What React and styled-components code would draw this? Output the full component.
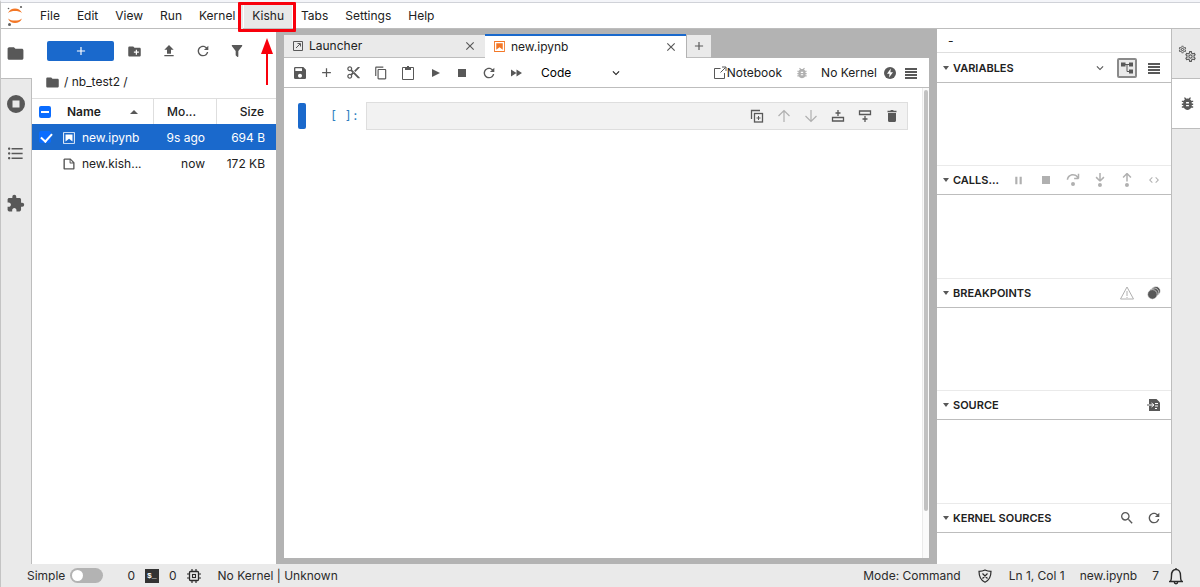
import React, { useState } from "react";
import styled, { createGlobalStyle, css } from "styled-components";
import {
  MdAdd,
  MdBugReport,
  MdClose,
  MdCode,
  MdContentCopy,
  MdContentCut,
  MdCreateNewFolder,
  MdExpandMore,
  MdExtension,
  MdFolder,
  MdFormatListBulleted,
  MdOutlineSettings,
  MdPause,
  MdSave,
  MdSearch,
  MdStop,
} from "react-icons/md";
import {
  VscDebugStepInto,
  VscDebugStepOut,
  VscDebugStepOver,
} from "react-icons/vsc";

const MENUS = [
  "File",
  "Edit",
  "View",
  "Run",
  "Kernel",
  "Kishu",
  "Tabs",
  "Settings",
  "Help",
];

const FILES = [
  { name: "new.ipynb", modified: "9s ago", size: "694 B", type: "notebook" },
  { name: "new.kish...", modified: "now", size: "172 KB", type: "file" },
];

/* ---------- icons ---------- */

const JupyterLogo = () => (
  <svg width="18" height="22" viewBox="0 0 18 22">
    <path d="M2 8C3.500 4.600 6 3.400 9 3.400s5.500 1.200 7 4.600C14 6.400 11.700 5.900 9 5.900S4 6.400 2 8z" fill="#f37726" />
    <path d="M2 13.500c1.500 3.400 4 4.600 7 4.600s5.500-1.200 7-4.600c-2 1.600-4.300 2.100-7 2.100s-5-.5-7-2.100z" fill="#f37726" />
    <circle cx="15" cy="2" r="1.100" fill="#616161" />
    <circle cx="2.500" cy="3.500" r="0.800" fill="#616161" />
    <circle cx="3.500" cy="19.500" r="1.500" fill="#616161" />
  </svg>
);

const UploadIcon = () => (
  <svg width="16" height="16" viewBox="0 0 24 24" fill="currentColor">
    <path d="M5 20h14v-2H5v2zm0-10h4v6h6v-6h4l-7-7-7 7z" />
  </svg>
);

const RefreshIcon = () => (
  <svg width="16" height="16" viewBox="0 0 18 18" fill="currentColor">
    <path d="M9 13.500c-2.490 0-4.500-2.010-4.500-4.500S6.510 4.500 9 4.500c1.240 0 2.360.52 3.170 1.330L10 8h5V3l-1.760 1.760C12.150 3.680 10.660 3 9 3 5.690 3 3.010 5.690 3.010 9S5.690 15 9 15c2.970 0 5.430-2.160 5.900-5h-1.520c-.46 2-2.240 3.500-4.380 3.500z" />
  </svg>
);

const FilterIcon = () => (
  <svg width="16" height="16" viewBox="0 0 24 24" fill="currentColor">
    <path d="M14 12v7.880c.04.3-.06.62-.29.83-.39.39-1.020.39-1.410 0l-2.010-2.010c-.23-.23-.33-.54-.29-.83V12h-.03L4.210 4.620c-.34-.43-.26-1.060.17-1.400.19-.14.4-.22.62-.22h14c.22 0 .43.08.62.22.43.34.51.97.17 1.400L14.030 12H14z" />
  </svg>
);

const NotebookIcon = ({ size = 14 }) => (
  <svg width={size} height={size} viewBox="0 0 22 22" fill="currentColor">
    <path d="M18.700 3.300v15.400H3.300V3.300h15.400m1.500-1.500H1.800v18.300h18.300l.1-18.300z" />
    <path d="M16.500 16.500l-5.400-4.300-5.600 4.300v-11h11z" />
  </svg>
);

const FileIcon = () => (
  <svg width="14" height="14" viewBox="0 0 22 22" fill="#585858">
    <path d="M19.300 8.200l-5.500-5.500c-.3-.3-.7-.5-1.200-.5H3.900c-.8.1-1.600.9-1.600 1.800v14.100c0 .9.7 1.600 1.600 1.600h14.200c.9 0 1.600-.7 1.600-1.600V9.400c.1-.5-.1-.9-.4-1.200zm-5.800-3.300l3.400 3.600h-3.400V4.900zm3.900 12.700H4.700c-.1 0-.2 0-.2-.2V4.700c0-.2.1-.3.2-.3h7.200v4.400s0 .8.3 1.100c.3.3 1.100.3 1.100.3h4.300v7.200s-.1.2-.2.2z" />
  </svg>
);

const RunningIcon = () => (
  <svg width="20" height="20" viewBox="0 0 20 20" fill="currentColor">
    <path fillRule="evenodd" d="M10 1a9 9 0 100 18 9 9 0 000-18zM6.500 6.500h7v7h-7z" />
  </svg>
);

const LauncherIcon = () => (
  <svg width="12" height="12" viewBox="0 0 12 12" fill="none" stroke="currentColor">
    <path d="M1.500 1.500h9v9h-9zM4 8l4-4M5.500 3.500h3v3" />
  </svg>
);

const PasteIcon = () => (
  <svg width="16" height="16" viewBox="0 0 16 16" fill="none" stroke="currentColor">
    <path d="M5.500 2.500h-3v12h11v-12h-3" />
    <path d="M5 2h6v3H5z" fill="currentColor" stroke="none" />
    <path d="M7 1h2v2H7z" fill="currentColor" stroke="none" />
  </svg>
);

const RunIcon = () => (
  <svg width="16" height="16" viewBox="0 0 16 16" fill="currentColor">
    <path d="M5 4l8 4-8 4z" />
  </svg>
);

const StopIcon = () => (
  <svg width="16" height="16" viewBox="0 0 16 16" fill="currentColor">
    <path d="M4 4h8v8H4z" />
  </svg>
);

const FastForwardIcon = () => (
  <svg width="16" height="16" viewBox="0 0 16 16" fill="currentColor">
    <path d="M3 4.500l5.500 3.500L3 11.500zM8.500 4.500l5.500 3.500-5.500 3.500z" />
  </svg>
);

const OpenIcon = () => (
  <svg width="14" height="14" viewBox="0 0 14 14" fill="none" stroke="#585858">
    <path d="M7.500 2.500h-6v10h10V7M7.500 6.500l5-5M9 1h4v4" />
  </svg>
);

const KernelIcon = () => (
  <svg width="14" height="14" viewBox="0 0 14 14">
    <circle cx="7" cy="7" r="6" fill="currentColor" />
    <path d="M7.800 2.500L4 7.800h2.500l-.4 3.700L10 6.200H7.400z" fill="#fff" />
  </svg>
);

const LinesIcon = () => (
  <svg width="14" height="14" viewBox="0 0 14 14" fill="currentColor">
    <path d="M1 2h12v2H1zM1 5h12v2H1zM1 8h12v2H1zM1 11h12v2H1z" />
  </svg>
);

const DuplicateIcon = () => (
  <svg width="14" height="14" viewBox="0 0 14 14" fill="none" stroke="currentColor">
    <path d="M1.500 10V1.500H10" strokeWidth="1.300" />
    <rect x="4.500" y="4.500" width="8" height="8.500" strokeWidth="1.300" />
    <path d="M8.500 7v4M6.500 9h4" />
  </svg>
);

const ArrowIcon = ({ down }) => (
  <svg width="14" height="14" viewBox="0 0 14 14" fill="none" stroke="currentColor" strokeWidth="1.200">
    <path d={down ? "M7 1v11.500M1.500 7L7 12.500 12.500 7" : "M7 13V1.500M1.500 7L7 1.500 12.500 7"} />
  </svg>
);

const InsertIcon = ({ below }) => (
  <svg width="14" height="14" viewBox="0 0 14 14" fill="none" stroke="currentColor" strokeWidth="1.300">
    {below ? (
      <path d="M1.500 2h11v3.500h-11zM7 7v6M4.500 10h5" />
    ) : (
      <path d="M1.500 8.500h11V12h-11zM7 1v6M4.500 4h5" />
    )}
  </svg>
);

const TrashIcon = () => (
  <svg width="14" height="14" viewBox="0 0 14 14" fill="currentColor">
    <path d="M3 4h8v7.500c0 .8-.6 1.500-1.400 1.500H4.400C3.600 13 3 12.300 3 11.500zM2.500 1.800h2.700L6 1h2l.8.8h2.700v1.400h-9z" />
  </svg>
);

const TreeIcon = () => (
  <svg width="14" height="14" viewBox="0 0 14 14">
    <path d="M5 3.500h5M7 3.500v7h3" fill="none" stroke="currentColor" />
    <path d="M1 1.500h4.500v4H1zM9 1.500h4v4H9zM9 8.500h4v4H9z" fill="currentColor" />
  </svg>
);

const WarningIcon = () => (
  <svg width="16" height="16" viewBox="0 0 16 16" fill="none" stroke="currentColor">
    <path d="M8 2L1.500 14h13zM8 6v5M8 12v1" />
  </svg>
);

const BreakpointsIcon = () => (
  <svg width="14" height="14" viewBox="0 0 14 14" stroke="#fff" strokeWidth="0.600" fill="currentColor">
    <circle cx="8.800" cy="5" r="4.600" />
    <circle cx="7.200" cy="6.600" r="4.600" />
    <circle cx="5.400" cy="8.400" r="4.800" />
  </svg>
);

const SourceIcon = () => (
  <svg width="14" height="14" viewBox="0 0 14 14">
    <path d="M2 1h7.500L13 4.500V13H2z" fill="currentColor" />
    <path d="M2 7h4M4.500 5L7 7 4.500 9M8 5.500h3M8 8h3M8 10.500h2" fill="none" stroke="#fff" />
    <path d="M0 7h2" stroke="currentColor" />
  </svg>
);

const GearsIcon = () => (
  <GearPair>
    <MdOutlineSettings size={9} />
    <MdOutlineSettings size={13} />
  </GearPair>
);

const TerminalIcon = () => (
  <TerminalBox aria-hidden="true">$_</TerminalBox>
);

const ChipIcon = () => (
  <svg width="14" height="14" viewBox="0 0 14 14" fill="none" stroke="currentColor">
    <rect x="2.500" y="2.500" width="9" height="9" rx="1" strokeWidth="1.300" />
    <rect x="5.500" y="5.500" width="3" height="3" strokeWidth="1.100" />
    <path d="M5 0v2M9 0v2M5 12v2M9 12v2M0 5h2M0 9h2M12 5h2M12 9h2" strokeWidth="1.200" />
  </svg>
);

const ShieldIcon = () => (
  <svg width="14" height="14" viewBox="0 0 14 14" fill="none" stroke="currentColor" strokeWidth="1.200">
    <path d="M7 1c2 1 4 1.300 6 1.300C13 8 11 11.500 7 13.200 3 11.500 1 8 1 2.300 3 2.300 5 2 7 1zM4.500 4.500l5 5M9.500 4.500l-5 5" />
  </svg>
);

const BellIcon = () => (
  <svg width="16" height="18" viewBox="0 0 16 18" fill="none" stroke="currentColor" strokeWidth="1.400">
    <path d="M8 1v1.500M1 14.500h14M2.500 14.500c1-1.500 1-3 1-6C3.500 4.500 5.500 2.500 8 2.500s4.500 2 4.500 6c0 3 0 4.500 1 6M6.300 15c0 2.300 3.400 2.300 3.400 0" />
  </svg>
);

/* ---------- parts ---------- */

const MenuBar = () => (
  <MenuStrip>
    <LogoBox>
      <JupyterLogo />
    </LogoBox>
    {MENUS.map((menu) =>
      menu === "Kishu" ? (
        <MenuButton key={menu} $active>
          {menu}
          <Highlight />
          <HighlightArrow width="12" height="48" viewBox="0 0 12 48">
            <path d="M6 0l6 16H7v31H5V16H0z" fill="#f8000c" />
          </HighlightArrow>
        </MenuButton>
      ) : (
        <MenuButton key={menu}>{menu}</MenuButton>
      )
    )}
  </MenuStrip>
);

const FileBrowser = () => {
  const [selected, setSelected] = useState("new.ipynb");

  return (
    <Browser>
      <BrowserToolbar>
        <NewButton aria-label="New Launcher">
          <MdAdd size={14} />
        </NewButton>
        <IconButton aria-label="New Folder">
          <MdCreateNewFolder size={15} />
        </IconButton>
        <IconButton aria-label="Upload Files">
          <UploadIcon />
        </IconButton>
        <IconButton aria-label="Refresh">
          <RefreshIcon />
        </IconButton>
        <IconButton aria-label="Filter">
          <FilterIcon />
        </IconButton>
      </BrowserToolbar>
      <Breadcrumbs>
        <MdFolder size={15} />
        <span>/ nb_test2 /</span>
      </Breadcrumbs>
      <FileTable>
        <colgroup>
          <CheckCol />
          <col />
          <ModifiedCol />
          <SizeCol />
        </colgroup>
        <thead>
          <tr>
            <HeadCell>
              <PartialCheck type="checkbox" aria-label="Select all" />
            </HeadCell>
            <HeadCell $bold>
              <NameHead>
                Name <SortArrow />
              </NameHead>
            </HeadCell>
            <HeadCell $divided>Mo...</HeadCell>
            <HeadCell $divided $right>
              Size
            </HeadCell>
          </tr>
        </thead>
        <tbody>
          {FILES.map((file) => (
            <FileRow
              key={file.name}
              $selected={selected === file.name}
              onClick={() => setSelected(file.name)}
            >
              <FileCell>
                {selected === file.name && (
                  <RowCheck
                    type="checkbox"
                    aria-label={`Select ${file.name}`}
                    checked
                    readOnly
                  />
                )}
              </FileCell>
              <FileCell>
                <FileName>
                  {file.type === "notebook" ? <NotebookIcon /> : <FileIcon />}
                  {file.name}
                </FileName>
              </FileCell>
              <FileCell $right>{file.modified}</FileCell>
              <FileCell $right>{file.size}</FileCell>
            </FileRow>
          ))}
        </tbody>
      </FileTable>
    </Browser>
  );
};

const NotebookToolbar = () => (
  <Toolbar>
    <IconButton aria-label="Save">
      <MdSave size={16} />
    </IconButton>
    <IconButton aria-label="Insert cell">
      <MdAdd size={15} />
    </IconButton>
    <IconButton aria-label="Cut">
      <MdContentCut size={15} />
    </IconButton>
    <IconButton aria-label="Copy">
      <MdContentCopy size={14} />
    </IconButton>
    <IconButton aria-label="Paste">
      <PasteIcon />
    </IconButton>
    <IconButton aria-label="Run">
      <RunIcon />
    </IconButton>
    <IconButton aria-label="Interrupt">
      <StopIcon />
    </IconButton>
    <IconButton aria-label="Restart">
      <RefreshIcon />
    </IconButton>
    <IconButton aria-label="Restart and run all">
      <FastForwardIcon />
    </IconButton>
    <SelectBox>
      <CellType aria-label="Cell type" defaultValue="Code">
        <option>Code</option>
        <option>Markdown</option>
        <option>Raw</option>
      </CellType>
      <MdExpandMore size={14} />
    </SelectBox>
    <Spacer />
    <TextButton>
      <OpenIcon />
      Notebook
    </TextButton>
    <BugButton aria-label="Enable debugger">
      <MdBugReport size={14} />
    </BugButton>
    <KernelButton>
      No Kernel
      <KernelIcon />
    </KernelButton>
    <MenuLines aria-label="Table of contents">
      <LinesIcon />
    </MenuLines>
  </Toolbar>
);

const Notebook = () => (
  <NotebookPane>
    <CellRow>
      <Collapser aria-label="Collapse cell" />
      <Prompt>[ ]:</Prompt>
      <CellEditor>
        <IconButton aria-label="Duplicate cell">
          <DuplicateIcon />
        </IconButton>
        <IconButton aria-label="Move up" $muted>
          <ArrowIcon />
        </IconButton>
        <IconButton aria-label="Move down" $muted>
          <ArrowIcon down />
        </IconButton>
        <IconButton aria-label="Insert above">
          <InsertIcon />
        </IconButton>
        <IconButton aria-label="Insert below">
          <InsertIcon below />
        </IconButton>
        <IconButton aria-label="Delete cell">
          <TrashIcon />
        </IconButton>
      </CellEditor>
    </CellRow>
    <ScrollTrack>
      <ScrollThumb />
    </ScrollTrack>
  </NotebookPane>
);

const Section = ({ title, children }) => (
  <SectionBox>
    <SectionHeader>
      <Caret />
      <SectionTitle>{title}</SectionTitle>
      <Spacer />
      {children}
    </SectionHeader>
  </SectionBox>
);

const DebuggerPanel = () => (
  <Debugger>
    <DebuggerTitle>-</DebuggerTitle>
    <Sections>
      <Section title="VARIABLES">
        <ScopeButton aria-label="Scope">
          <MdExpandMore size={14} />
        </ScopeButton>
        <TreeButton aria-label="Tree view">
          <TreeIcon />
        </TreeButton>
        <IconButton aria-label="Table view">
          <LinesIcon />
        </IconButton>
      </Section>
      <Section title="CALLS...">
        <IconButton aria-label="Pause" $muted>
          <MdPause size={13} />
        </IconButton>
        <IconButton aria-label="Terminate" $muted>
          <MdStop size={16} />
        </IconButton>
        <IconButton aria-label="Next" $muted>
          <VscDebugStepOver size={16} />
        </IconButton>
        <IconButton aria-label="Step in" $muted>
          <VscDebugStepInto size={16} />
        </IconButton>
        <IconButton aria-label="Step out" $muted>
          <VscDebugStepOut size={16} />
        </IconButton>
        <IconButton aria-label="Evaluate code" $muted>
          <MdCode size={12} />
        </IconButton>
      </Section>
      <Section title="BREAKPOINTS">
        <IconButton aria-label="Pause on exceptions" $muted>
          <WarningIcon />
        </IconButton>
        <IconButton aria-label="Remove all breakpoints">
          <BreakpointsIcon />
        </IconButton>
      </Section>
      <Section title="SOURCE">
        <IconButton aria-label="Open source">
          <SourceIcon />
        </IconButton>
      </Section>
      <Section title="KERNEL SOURCES">
        <IconButton aria-label="Filter sources">
          <MdSearch size={16} />
        </IconButton>
        <IconButton aria-label="Refresh sources">
          <RefreshIcon />
        </IconButton>
      </Section>
    </Sections>
  </Debugger>
);

const StatusBar = () => (
  <Status>
    <SimpleLabel>
      Simple
      <Switch type="checkbox" role="switch" />
    </SimpleLabel>
    <Counts>
      <span>0</span>
      <TerminalIcon />
      <span>0</span>
      <ChipIcon />
    </Counts>
    <span>No Kernel | Unknown</span>
    <Spacer />
    <StatusGroup>
      <span>Mode: Command</span>
      <ShieldIcon />
      <span>Ln 1, Col 1</span>
    </StatusGroup>
    <span>new.ipynb</span>
    <Notifications aria-label="7 notifications">
      7
      <BellIcon />
    </Notifications>
  </Status>
);

const App = () => {
  return (
    <Shell>
      <GlobalStyle />
      <MenuBar />
      <Main>
        <LeftBar>
          <SideTab $active aria-label="File Browser">
            <MdFolder size={19} />
          </SideTab>
          <SideTab aria-label="Running">
            <RunningIcon />
          </SideTab>
          <SideTab aria-label="Table of Contents">
            <MdFormatListBulleted size={19} />
          </SideTab>
          <SideTab aria-label="Extensions">
            <MdExtension size={19} />
          </SideTab>
        </LeftBar>
        <FileBrowser />
        <Dock>
          <TabBar>
            <Tab>
              <LauncherIcon />
              <TabLabel>Launcher</TabLabel>
              <CloseButton aria-label="Close Launcher">
                <MdClose size={14} />
              </CloseButton>
            </Tab>
            <Tab $active>
              <OrangeIcon>
                <NotebookIcon size={13} />
              </OrangeIcon>
              <TabLabel>new.ipynb</TabLabel>
              <CloseButton aria-label="Close new.ipynb">
                <MdClose size={14} />
              </CloseButton>
            </Tab>
            <AddTab aria-label="New tab">
              <MdAdd size={14} />
            </AddTab>
          </TabBar>
          <NotebookToolbar />
          <Notebook />
        </Dock>
        <DebuggerPanel />
        <RightBar>
          <SideTab aria-label="Property Inspector">
            <GearsIcon />
          </SideTab>
          <SideTab $active aria-label="Debugger">
            <MdBugReport size={17} />
          </SideTab>
        </RightBar>
      </Main>
      <StatusBar />
    </Shell>
  );
};

export default App;

/* ---------- styles ---------- */

const GlobalStyle = createGlobalStyle`
  * {
    box-sizing: border-box;
  }

  body {
    margin: 0;
    background: #ffffff;
    color: #212121;
    font-family: Inter, "Liberation Sans", sans-serif;
    font-size: 12px;
    line-height: 16px;
  }

  button,
  select,
  input {
    margin: 0;
    padding: 0;
    border: none;
    background: none;
    color: inherit;
    font: inherit;
  }

  svg {
    display: block;
    flex: none;
  }
`;

const Shell = styled.div`
  display: flex;
  flex-direction: column;
  min-height: 100vh;
  border-top: 2px solid #f4f5f9;
  border-left: 1px solid #c4c4c4;
`;

const MenuStrip = styled.nav`
  display: flex;
  gap: 1px;
  height: 27px;
  border-top: 1px solid #d0d2d8;
  border-bottom: 1px solid #bdbdbd;
`;

const LogoBox = styled.div`
  display: flex;
  align-items: center;
  padding: 0 7px 0 5px;
`;

const MenuButton = styled.button`
  position: relative;
  padding: 0 8px;
  background: ${({ $active }) => ($active ? "#e8e8e8" : "transparent")};
`;

const Highlight = styled.span`
  position: absolute;
  inset: -1px -4px -4px -6px;
  border: 3px solid #f8000c;
  border-radius: 1px;
  background: linear-gradient(90deg, #e8e8e8 2px, transparent 2px);
  z-index: 1;
`;

const HighlightArrow = styled.svg`
  position: absolute;
  top: 35px;
  left: 50%;
  margin-left: -7px;
  z-index: 1;
`;

const Main = styled.main`
  flex: 1;
  display: flex;
`;

const LeftBar = styled.aside`
  width: 31px;
  background: #eaeaea;
  border-right: 1px solid #bdbdbd;
`;

const RightBar = styled.aside`
  width: 29px;
  background: #eaeaea;
  border-left: 1px solid #bdbdbd;
`;

const SideTab = styled.button`
  display: flex;
  align-items: center;
  justify-content: center;
  width: 100%;
  height: 50px;
  color: #585858;
  background: ${({ $active }) => ($active ? "#ffffff" : "transparent")};
  ${LeftBar} & {
    padding-right: 1px;
  }
  ${LeftBar} &:first-child {
    width: 31px;
    height: 49px;
    padding-right: 2px;
  }
  ${LeftBar} &:nth-child(2) {
    border-top: 1px solid #bdbdbd;
  }
  ${RightBar} & {
    padding-left: 2px;
    border-bottom: 1px solid #bdbdbd;
  }
`;

const GearPair = styled.span`
  display: flex;
  width: 18px;
  svg:last-child {
    margin: 5px 0 0 -3px;
  }
`;

const Browser = styled.section`
  width: 244px;
`;

const BrowserToolbar = styled.div`
  display: flex;
  align-items: center;
  gap: 7px;
  padding: 12px 14px 0 15px;
`;

const IconButton = styled.button`
  display: flex;
  align-items: center;
  justify-content: center;
  flex: none;
  width: 27px;
  height: 20px;
  color: ${({ $muted }) => ($muted ? "#b0b0b0" : "#585858")};
`;

const NewButton = styled(IconButton)`
  width: 67px;
  border-radius: 2px;
  background: #1a69cc;
  color: #ffffff;
`;

const Breadcrumbs = styled.div`
  display: flex;
  align-items: center;
  gap: 4px;
  padding: 13px 13px 8px;
  svg {
    color: #585858;
  }
`;

const FileTable = styled.table`
  width: 100%;
  table-layout: fixed;
  border-collapse: separate;
  border-spacing: 0;
  border-top: 1px solid #dedede;
`;

const CheckCol = styled.col`
  width: 27px;
`;

const ModifiedCol = styled.col`
  width: 63px;
`;

const SizeCol = styled.col`
  width: 60px;
`;

const HeadCell = styled.th`
  height: 25px;
  padding: 1px 12px 0 ${({ $divided }) => ($divided ? "14px" : "8px")};
  text-align: ${({ $right }) => ($right ? "right" : "left")};
  font-weight: ${({ $bold }) => ($bold ? 600 : 500)};
  &:first-child {
    padding: 0 0 0 7px;
  }
  ${({ $divided }) =>
    $divided &&
    css`
      background: linear-gradient(#dedede, #dedede) left / 1px 100% no-repeat;
    `}
`;

const NameHead = styled.span`
  display: flex;
  align-items: center;
  justify-content: space-between;
  padding-right: 3px;
`;

const SortArrow = styled.span`
  border: 4px solid transparent;
  border-top: none;
  border-bottom: 4px solid #585858;
`;

const checkBase = css`
  appearance: none;
  display: block;
  width: 12px;
  height: 12px;
  border-radius: 2px;
  background: #0a6cff;
`;

const PartialCheck = styled.input`
  ${checkBase}
  background: linear-gradient(#fff, #fff) center / 8px 2px no-repeat #0a6cff;
`;

const RowCheck = styled.input`
  ${checkBase}
  &::after {
    content: "";
    display: block;
    width: 5px;
    height: 9px;
    margin-left: 4px;
    border: solid #ffffff;
    border-width: 0 2px 2px 0;
    transform: rotate(42deg);
  }
`;

const FileRow = styled.tr`
  background: ${({ $selected }) => ($selected ? "#1a69cc" : "transparent")};
  color: ${({ $selected }) => ($selected ? "#ffffff" : "#212121")};
`;

const FileCell = styled.td`
  height: 26px;
  padding: 1px ${({ $right }) => ($right ? "11px" : "0")} 0
    ${({ $right }) => ($right ? "0" : "3px")};
  text-align: ${({ $right }) => ($right ? "right" : "left")};
  white-space: nowrap;
  &:first-child {
    padding: 0 0 0 7px;
  }
`;

const FileName = styled.span`
  display: flex;
  align-items: center;
  gap: 6px;
`;

const Dock = styled.section`
  flex: 1;
  min-width: 0;
  display: flex;
  flex-direction: column;
  padding: 5px 8px 6px;
  background: #b3b3b3;
`;

const TabBar = styled.div`
  display: flex;
  height: 24px;
`;

const Tab = styled.div`
  flex: 0 1 201px;
  display: flex;
  align-items: center;
  gap: 5px;
  margin-top: ${({ $active }) => ($active ? "0" : "1px")};
  padding: 0 8px;
  background: #eaeaea;
  border-bottom: 1px solid #bdbdbd;
  color: #212121;
  svg {
    color: #585858;
  }
  ${({ $active }) =>
    $active &&
    css`
      background: #ffffff;
      border-top: 2px solid #1a69cc;
      border-bottom-color: #ffffff;
    `}
`;

const TabLabel = styled.span`
  flex: 1;
`;

const OrangeIcon = styled.span`
  && svg {
    color: #f37726;
  }
`;

const CloseButton = styled.button`
  display: flex;
`;

const AddTab = styled.button`
  display: flex;
  align-items: center;
  justify-content: center;
  width: 24px;
  margin-top: 1px;
  margin-left: 1px;
  background: #eaeaea;
  border-bottom: 1px solid #bdbdbd;
  color: #585858;
`;

const Toolbar = styled.div`
  display: flex;
  align-items: center;
  height: 30px;
  padding: 0 4px 0 2px;
  background: #ffffff;
  border-bottom: 1px solid #bdbdbd;
`;

const SelectBox = styled.span`
  display: flex;
  align-items: center;
  width: 82px;
  margin-left: 12px;
  color: #212121;
  svg {
    margin-left: -14px;
    pointer-events: none;
  }
`;

const CellType = styled.select`
  appearance: none;
  width: 100%;
  outline: none;
  color: #000000;
`;

const Spacer = styled.span`
  flex: 1;
`;

const TextButton = styled.button`
  display: flex;
  align-items: center;
  color: #212121;
`;

const BugButton = styled(IconButton)`
  margin: 0 6px;
  color: #b0b0b0;
`;

const KernelButton = styled(TextButton)`
  gap: 6px;
  svg {
    color: #585858;
  }
`;

const MenuLines = styled(IconButton)`
  width: 28px;
`;

const NotebookPane = styled.div`
  flex: 1;
  display: flex;
  background: #ffffff;
`;

const CellRow = styled.div`
  flex: 1;
  display: flex;
  align-items: flex-start;
  padding: 14px 14px 0;
`;

const Collapser = styled.button`
  width: 8px;
  height: 26px;
  margin-top: 1px;
  border-radius: 2px;
  background: #1a69cc;
`;

const Prompt = styled.span`
  width: 60px;
  padding-right: 7px;
  text-align: right;
  color: #307fc1;
  font-family: "DejaVu Sans Mono", monospace;
  font-size: 12px;
  line-height: 28px;
`;

const CellEditor = styled.div`
  flex: 1;
  display: flex;
  align-items: center;
  justify-content: flex-end;
  height: 28px;
  padding-right: 2px;
  background: #f2f2f2;
  border: 1px solid #dedede;
`;

const ScrollTrack = styled.div`
  width: 7px;
  padding: 2px 1px 0;
  background: #fafafa;
  border-left: 1px solid #eaeaea;
`;

const ScrollThumb = styled.div`
  height: 90%;
  border-radius: 2px;
  background: #c1c1c1;
`;

const Debugger = styled.aside`
  width: 234px;
  display: flex;
  flex-direction: column;
`;

const DebuggerTitle = styled.div`
  height: 24px;
  padding: 4px 11px;
  border-bottom: 1px solid #dedede;
`;

const Sections = styled.div`
  flex: 1;
  display: flex;
  flex-direction: column;
`;

const SectionBox = styled.section`
  flex: 0 0 22%;
  &:last-child {
    flex: 1;
  }
  & + & {
    border-top: 1px solid #eaeaea;
  }
`;

const SectionHeader = styled.header`
  display: flex;
  align-items: center;
  height: 30px;
  padding: 0 4px 0 6px;
  border-bottom: 1px solid #bdbdbd;
  ${SectionBox} + ${SectionBox} & {
    height: 29px;
  }
`;

const Caret = styled.span`
  border: 3px solid transparent;
  border-top: 4px solid #585858;
  border-bottom: none;
`;

const SectionTitle = styled.h2`
  margin: 0 0 0 4px;
  font-size: 11px;
  font-weight: 600;
  white-space: nowrap;
`;

const ScopeButton = styled(IconButton)`
  width: 24px;
`;

const TreeButton = styled(IconButton)`
  width: 20px;
  margin: 0 3px 0 5px;
  border: 2px solid #8a8a8a;
  background: #eaeaea;
  border-radius: 2px;
`;

const Status = styled.footer`
  display: flex;
  align-items: center;
  height: 23px;
  padding: 0 16px 0 26px;
  background: #eaeaea;
  color: #2b2b2b;
`;

const SimpleLabel = styled.label`
  display: flex;
  align-items: center;
  gap: 5px;
`;

const Switch = styled.input`
  appearance: none;
  width: 33px;
  height: 15px;
  padding: 2px;
  border-radius: 8px;
  background: #b3b3b3;
  &::after {
    content: "";
    display: block;
    width: 11px;
    height: 11px;
    border-radius: 50%;
    background: #ffffff;
  }
  &:checked::after {
    margin-left: auto;
  }
`;

const Counts = styled.span`
  display: flex;
  align-items: center;
  gap: 10px;
  margin: 0 17px 0 24px;
`;

const TerminalBox = styled.span`
  width: 14px;
  height: 14px;
  padding-left: 2px;
  background: #333333;
  color: #ffffff;
  font-family: "Liberation Mono", monospace;
  font-size: 8px;
  font-weight: 700;
  line-height: 13px;
`;

const StatusGroup = styled.span`
  display: flex;
  align-items: center;
  gap: 17px;
  margin-right: 15px;
`;

const Notifications = styled.button`
  display: flex;
  align-items: center;
  gap: 9px;
  margin-left: 15px;
`;
